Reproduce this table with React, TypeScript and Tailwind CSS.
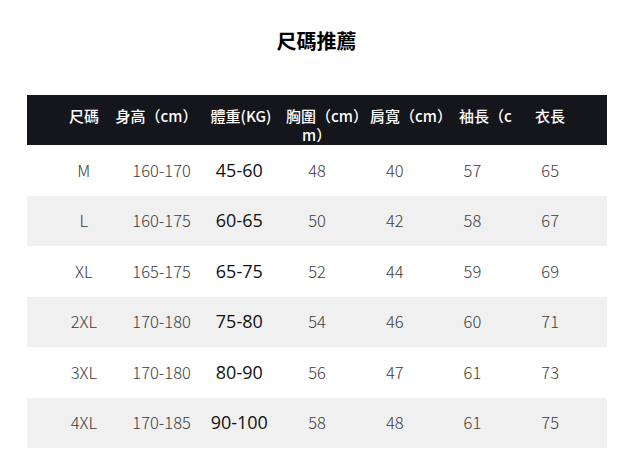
import React from "react";

const rows = [
  ["M", "160-170", "45-60", "48", "40", "57", "65"],
  ["L", "160-175", "60-65", "50", "42", "58", "67"],
  ["XL", "165-175", "65-75", "52", "44", "59", "69"],
  ["2XL", "170-180", "75-80", "54", "46", "60", "71"],
  ["3XL", "170-180", "80-90", "56", "47", "61", "73"],
  ["4XL", "170-185", "90-100", "58", "48", "61", "75"],
];

const cjk = { fontFamily: '"Noto Sans CJK TC", "Noto Sans CJK SC", sans-serif' };

export default function App() {
  return (
    <div className="w-[633px] h-[474px] bg-white overflow-hidden" style={cjk}>
      <div className="pt-[27px] h-[95px]">
        <h1 className="text-center text-[20px] leading-[28px] font-bold text-black">尺碼推薦</h1>
      </div>
      <div className="mx-[27px] w-[580px]">
        <div className="h-[50px] bg-[#15151c] px-[18px] pt-[11px] text-white text-[15px] leading-[19px] font-medium">
          <div className="grid grid-cols-[78px_67px_96px_77px_96px_53px_76px]">
            <div className="flex justify-center whitespace-nowrap">尺碼</div>
            <div className="flex justify-center whitespace-nowrap">身高（cm）</div>
            <div className="flex justify-center whitespace-nowrap pl-[6px]">體重(KG)</div>
            <div className="flex flex-col items-start whitespace-nowrap">
              <span>胸圍（cm）</span>
              <span className="pl-[16px]">m）</span>
            </div>
            <div className="flex justify-center whitespace-nowrap">肩寬（cm）</div>
            <div className="flex justify-center whitespace-nowrap">袖長（c</div>
            <div className="flex justify-center whitespace-nowrap">衣長</div>
          </div>
        </div>
        {rows.map((r, i) => (
          <div
            key={r[0]}
            className={`h-[50.5px] px-[18px] grid grid-cols-7 items-center ${i % 2 === 1 ? "bg-[#f0f0f0]" : "bg-white"}`}
          >
            {r.map((c, j) =>
              j === 2 ? (
                <div
                  key={j}
                  className="text-center text-[18px] text-[#111111]"
                  style={{ fontFamily: '"Open Sans", sans-serif' }}
                >
                  {c}
                </div>
              ) : (
                <div key={j} className="text-center text-[16.5px] font-light text-[#3c3c3c]">
                  {c}
                </div>
              )
            )}
          </div>
        ))}
      </div>
    </div>
  );
}
